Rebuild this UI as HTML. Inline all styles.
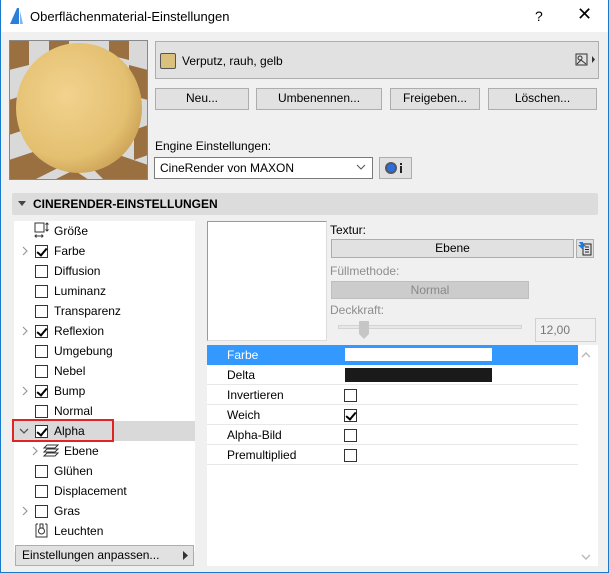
<!DOCTYPE html>
<html><head><meta charset="utf-8"><style>
*{box-sizing:border-box;margin:0;padding:0}
body{width:609px;height:573px;overflow:hidden;background:#f0f0f0;font-family:"Liberation Sans",sans-serif;font-size:12px;color:#000;position:relative}
.a{position:absolute}
.btn{position:absolute;background:#e1e1e1;border:1px solid #adadad;text-align:center;line-height:19px}
.cb{position:absolute;width:13px;height:13px;border:1px solid #333;background:#fff}
.cb.k::after{content:"";position:absolute;left:3px;top:0px;width:4px;height:8px;border:solid #000;border-width:0 2px 2px 0;transform:rotate(40deg)}
.li{position:absolute;left:54px;height:20px;line-height:20px}
.chev{position:absolute;width:6px;height:10px}
.row{position:absolute;left:207px;width:371px;height:20px;border-bottom:1px solid #e8e8e8;line-height:20px}
.row span{position:absolute;left:20px}
</style></head><body>
<div class="a" style="left:0;top:0;width:609px;height:573px;border:1px solid #1979ca;border-top:none"></div>
<div class="a" style="left:1px;top:0;width:607px;height:32px;background:#fff"></div>
<svg class="a" style="left:8px;top:7px" width="16" height="18"><path d="M2 17 L9 1 L11 1 L11 17Z" fill="#2a7fd8"/><path d="M12 17 L12 4 L15 17Z" fill="#7fb6ee"/></svg>
<div class="a" style="left:30px;top:9px;font-size:13px">Oberflächenmaterial-Einstellungen</div>
<div class="a" style="left:535px;top:8px;font-size:14px">?</div>
<div class="a" style="left:577px;top:4px;font-size:18px;font-weight:300">✕</div>

<svg class="a" style="left:9px;top:40px" width="139" height="140">
<rect width="139" height="140" fill="#d9d9d9"/>
<polygon points="0,0 20,0 20,25 0,30" fill="#9b7040"/><polygon points="40,0 60,0 60,12 40,15" fill="#9b7040"/>
<polygon points="100,0 120,0 120,20 100,15" fill="#9b7040"/><polygon points="120,25 139,30 139,60 120,55" fill="#9b7040"/>
<polygon points="0,60 15,55 15,90 0,95" fill="#9b7040"/><polygon points="125,90 139,85 139,115 125,120" fill="#9b7040"/>
<polygon points="0,120 30,110 55,125 25,140 0,140" fill="#9b7040"/><polygon points="80,125 110,115 139,125 139,140 95,140" fill="#9b7040"/>
<polygon points="45,140 65,130 80,140" fill="#9b7040"/>
<rect x="0.5" y="0.5" width="138" height="139" fill="none" stroke="#888"/>
<defs><radialGradient id="g" cx="0.4" cy="0.4" r="0.7"><stop offset="0" stop-color="#f2d38e"/><stop offset="0.7" stop-color="#e3bf70"/><stop offset="1" stop-color="#c69a50"/></radialGradient></defs>
<ellipse cx="70" cy="68" rx="63" ry="65" fill="url(#g)"/>
</svg>

<div class="a" style="left:155px;top:41px;width:444px;height:38px;background:#e1e1e1;border:1px solid #adadad"></div>
<div class="a" style="left:160px;top:53px;width:16px;height:16px;background:#d9c07c;border:1px solid #555;border-radius:2px"></div>
<div class="a" style="left:182px;top:54px">Verputz, rauh, gelb</div>
<svg class="a" style="left:575px;top:53px" width="22" height="14"><rect x="1" y="1" width="11" height="11" fill="none" stroke="#333"/><circle cx="5" cy="5" r="2" fill="none" stroke="#333"/><path d="M2 11 L6 7 L11 11" fill="none" stroke="#333"/><path d="M17 3 L20 6.5 L17 10Z" fill="#333"/></svg>

<div class="btn" style="left:155px;top:88px;width:94px;height:22px">Neu...</div>
<div class="btn" style="left:256px;top:88px;width:126px;height:22px">Umbenennen...</div>
<div class="btn" style="left:390px;top:88px;width:90px;height:22px">Freigeben...</div>
<div class="btn" style="left:488px;top:88px;width:109px;height:22px">Löschen...</div>

<div class="a" style="left:155px;top:139px">Engine Einstellungen:</div>
<div class="a" style="left:154px;top:157px;width:219px;height:22px;background:#fff;border:1px solid #7a7a7a;padding-left:5px;line-height:20px">CineRender von MAXON</div>
<svg class="a" style="left:356px;top:164px" width="10" height="7"><path d="M1 1 L5 5 L9 1" fill="none" stroke="#555"/></svg>
<div class="btn" style="left:379px;top:157px;width:33px;height:22px"></div>
<svg class="a" style="left:384px;top:161px" width="24" height="14"><circle cx="7" cy="7" r="6" fill="#556" /><circle cx="7" cy="7" r="4" fill="#2a6fdc"/><rect x="16" y="2" width="2" height="2" fill="#222"/><rect x="16" y="5" width="2" height="7" fill="#222"/></svg>

<div class="a" style="left:12px;top:193px;width:586px;height:22px;background:#dcdcdc;border-radius:2px"></div>
<svg class="a" style="left:18px;top:201px" width="8" height="6"><path d="M0 0 L8 0 L4 5Z" fill="#444"/></svg>
<div class="a" style="left:33px;top:197px;font-weight:bold;font-size:12px">CINERENDER-EINSTELLUNGEN</div>

<div class="a" style="left:14px;top:221px;width:181px;height:331px;background:#fff"></div>
<div class="a" style="left:14px;top:421px;width:181px;height:20px;background:#d9d9d9"></div>
<div class="a" style="left:12px;top:419px;width:102px;height:23px;border:2px solid #e02424"></div>
<svg class="a" style="left:34px;top:222px" width="16" height="17"><rect x="1" y="1" width="9" height="9" fill="none" stroke="#333"/><path d="M13 1 V9 M11.5 2.5 L13 1 L14.5 2.5 M11.5 7.5 L13 9 L14.5 7.5 M1 14 H9 M2.5 12.5 L1 14 L2.5 15.5 M7.5 12.5 L9 14 L7.5 15.5" fill="none" stroke="#333"/></svg>
<div class="li" style="top:221px">Größe</div>
<svg class="chev" style="left:22px;top:246px"><path d="M1 1 L5 5 L1 9" fill="none" stroke="#999" stroke-width="1.2"/></svg><div class="cb k" style="left:35px;top:245px"></div><div class="li" style="top:241px">Farbe</div>
<div class="cb" style="left:35px;top:265px"></div><div class="li" style="top:261px">Diffusion</div>
<div class="cb" style="left:35px;top:285px"></div><div class="li" style="top:281px">Luminanz</div>
<div class="cb" style="left:35px;top:305px"></div><div class="li" style="top:301px">Transparenz</div>
<svg class="chev" style="left:22px;top:326px"><path d="M1 1 L5 5 L1 9" fill="none" stroke="#999" stroke-width="1.2"/></svg><div class="cb k" style="left:35px;top:325px"></div><div class="li" style="top:321px">Reflexion</div>
<div class="cb" style="left:35px;top:345px"></div><div class="li" style="top:341px">Umgebung</div>
<div class="cb" style="left:35px;top:365px"></div><div class="li" style="top:361px">Nebel</div>
<svg class="chev" style="left:22px;top:386px"><path d="M1 1 L5 5 L1 9" fill="none" stroke="#999" stroke-width="1.2"/></svg><div class="cb k" style="left:35px;top:385px"></div><div class="li" style="top:381px">Bump</div>
<div class="cb" style="left:35px;top:405px"></div><div class="li" style="top:401px">Normal</div>
<svg class="a" style="left:19px;top:428px" width="10" height="7"><path d="M1 1 L5 5 L9 1" fill="none" stroke="#555" stroke-width="1.3"/></svg>
<div class="cb k" style="left:35px;top:425px"></div><div class="li" style="top:421px">Alpha</div>
<svg class="chev" style="left:32px;top:446px"><path d="M1 1 L5 5 L1 9" fill="none" stroke="#999" stroke-width="1.2"/></svg>
<svg class="a" style="left:43px;top:443px" width="16" height="16"><path d="M4 2 H15 L12 5 H1Z M4 6 H15 L12 9 H1Z M4 10 H15 L12 13 H1Z" fill="none" stroke="#333"/></svg>
<div class="li" style="top:441px;left:64px">Ebene</div>
<div class="cb" style="left:35px;top:465px"></div><div class="li" style="top:461px">Glühen</div>
<div class="cb" style="left:35px;top:485px"></div><div class="li" style="top:481px">Displacement</div>
<svg class="chev" style="left:22px;top:506px"><path d="M1 1 L5 5 L1 9" fill="none" stroke="#999" stroke-width="1.2"/></svg><div class="cb" style="left:35px;top:505px"></div><div class="li" style="top:501px">Gras</div>
<svg class="a" style="left:34px;top:522px" width="15" height="17"><path d="M2 2 H4 M11 2 H13 M2 2 V15 H13 V2" fill="none" stroke="#333"/><circle cx="7.5" cy="9" r="3" fill="none" stroke="#333"/><path d="M6 2 H9 V6 H6Z" fill="none" stroke="#333"/></svg>
<div class="li" style="top:521px">Leuchten</div>

<div class="btn" style="left:15px;top:545px;width:179px;height:21px;text-align:left;padding-left:6px">Einstellungen anpassen...</div>
<svg class="a" style="left:183px;top:551px" width="6" height="9"><path d="M0 0 L5 4.5 L0 9Z" fill="#333"/></svg>

<div class="a" style="left:207px;top:221px;width:391px;height:345px;background:#fff"></div>
<div class="a" style="left:207px;top:221px;width:391px;height:124px;background:#f0f0f0"></div>
<div class="a" style="left:207px;top:221px;width:120px;height:120px;background:#fff;border:1px solid #999;border-right-color:#ddd;border-bottom-color:#ddd"></div>
<div class="a" style="left:330px;top:223px">Textur:</div>
<div class="btn" style="left:331px;top:239px;width:243px;height:19px;line-height:17px">Ebene</div>
<div class="a" style="left:576px;top:239px;width:18px;height:19px;background:#e1e1e1;border:1px solid #adadad"></div>
<svg class="a" style="left:578px;top:241px" width="15" height="15"><path d="M5 3 H13 V14 H5Z M7 6 H11 M7 8.5 H11 M7 11 H11" fill="none" stroke="#222"/><path d="M1 1 H5 V4 L8 4 L4 8 L0 4 H3Z" fill="#1e7ae0"/></svg>
<div class="a" style="left:330px;top:264px;color:#8d8d8d">Füllmethode:</div>
<div class="a" style="left:331px;top:281px;width:198px;height:18px;background:#cccccc;border:1px solid #bfbfbf;text-align:center;line-height:16px;color:#888">Normal</div>
<div class="a" style="left:330px;top:303px;color:#8d8d8d">Deckkraft:</div>
<div class="a" style="left:338px;top:325px;width:184px;height:4px;background:#e7e7e7;border:1px solid #d3d3d3"></div>
<svg class="a" style="left:358px;top:320px" width="12" height="20"><path d="M1 1 H11 V14 L6 19 L1 14Z" fill="#c6c6c6"/></svg>
<div class="a" style="left:535px;top:318px;width:61px;height:24px;border:1px solid #d0d0d0;background:#f0f0f0;color:#777;padding-left:4px;line-height:22px">12,00</div>

<div class="row" style="top:345px;background:#3399ff;color:#fff;border-bottom:none"><span>Farbe</span></div>
<div class="a" style="left:345px;top:348px;width:147px;height:13px;background:#fff"></div>
<div class="row" style="top:365px"><span>Delta</span></div>
<div class="a" style="left:345px;top:368px;width:147px;height:14px;background:#1a1a1a"></div>
<div class="row" style="top:385px"><span>Invertieren</span></div><div class="cb" style="left:344px;top:389px"></div>
<div class="row" style="top:405px"><span>Weich</span></div><div class="cb k" style="left:344px;top:409px"></div>
<div class="row" style="top:425px"><span>Alpha-Bild</span></div><div class="cb" style="left:344px;top:429px"></div>
<div class="row" style="top:445px"><span>Premultiplied</span></div><div class="cb" style="left:344px;top:449px"></div>
<svg class="a" style="left:581px;top:351px" width="10" height="7"><path d="M1 6 L5 2 L9 6" fill="none" stroke="#bbb" stroke-width="1.5"/></svg>
<svg class="a" style="left:581px;top:554px" width="10" height="7"><path d="M1 1 L5 5 L9 1" fill="none" stroke="#bbb" stroke-width="1.5"/></svg>
</body></html>
